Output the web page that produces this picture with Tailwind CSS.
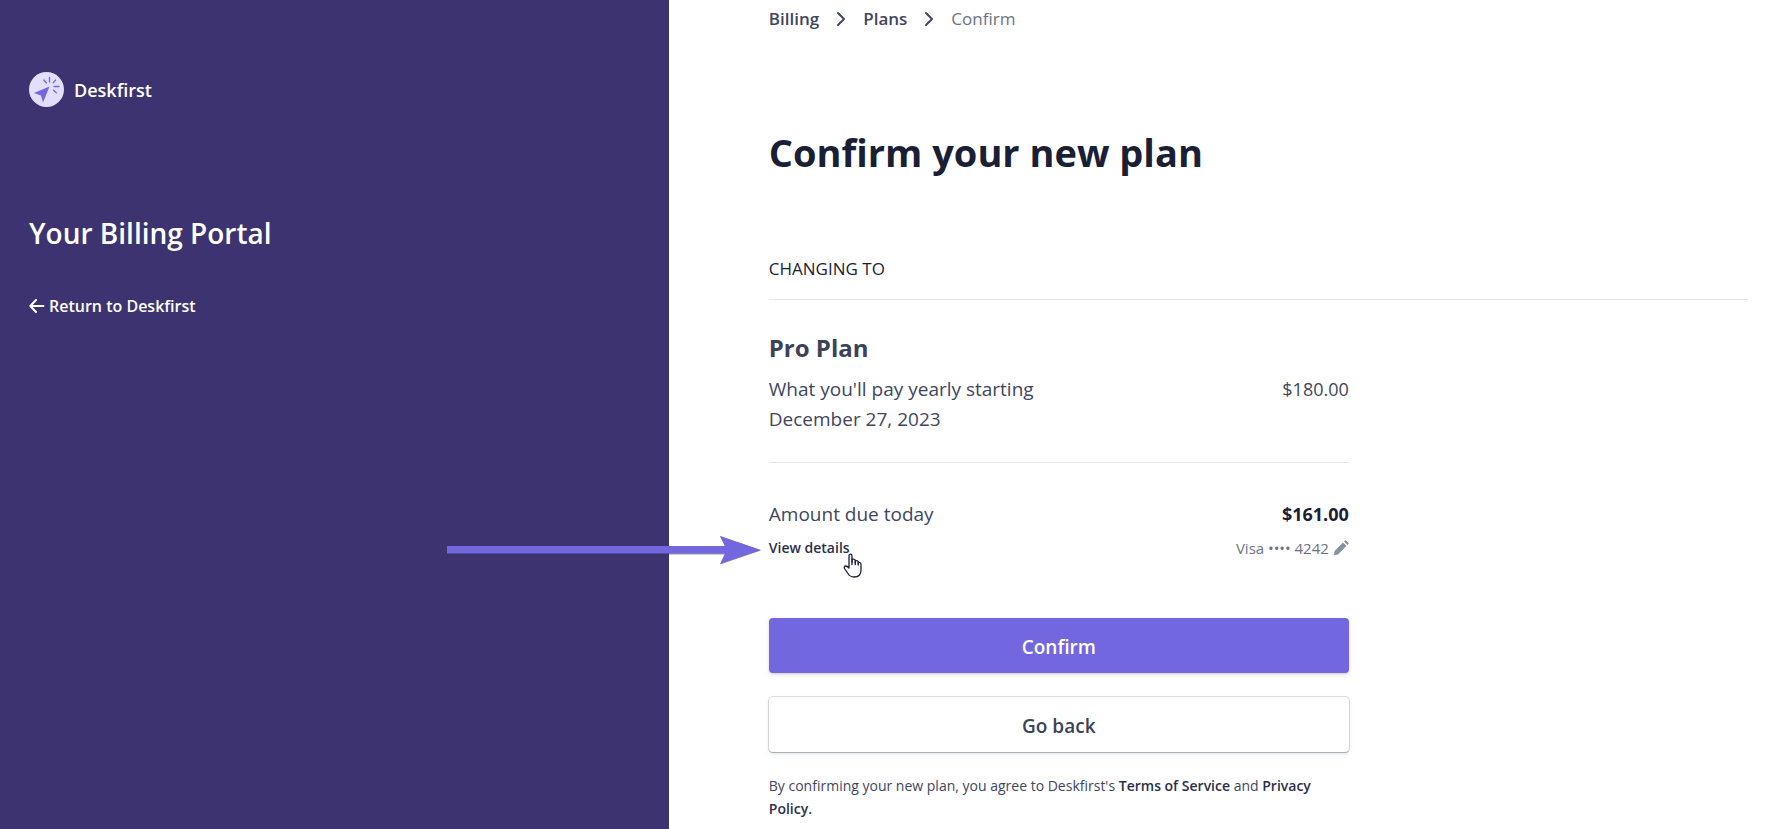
<!DOCTYPE html>
<html lang="en">
<head>
    <meta charset="UTF-8">
    <meta name="viewport" content="width=device-width, initial-scale=1.0">
    <title>Billing Portal</title>
    <script src="https://cdn.jsdelivr.net/npm/@tailwindcss/browser@4"></script>
</head>
<body class="flex min-h-screen bg-white font-['Open_Sans','Noto_Sans',sans-serif] text-[#414660]">
    <!-- Sidebar -->
    <aside class="w-[37.7%] shrink-0 bg-[#3d3370] pl-[29px] pt-[72px] text-white">
        <div class="flex items-center gap-[10px]">
            <svg class="size-[35px]" viewBox="0 0 35 35" fill="none">
                <circle cx="17.5" cy="17.5" r="17.5" fill="#e2defe"/>
                <path d="M20.5 14.5 14 30.5 12 23.5 5 21Z" fill="#7267df"/>
                <path d="M20.5 5.5v4.5M14.8 8l2.6 3M26.6 8l-2.4 2.8M25 14.5h5M24.5 18.2l2.8 2.6" stroke="#7267df" stroke-width="1.3" stroke-linecap="round"/>
            </svg>
            <span class="text-lg leading-7 font-semibold">Deskfirst</span>
        </div>
        <h2 class="mt-[106px] text-[28px] leading-10 font-semibold">Your Billing Portal</h2>
        <a href="#" class="mt-[39px] inline-flex items-center gap-1 text-base leading-7 font-semibold">
            <svg class="size-4" viewBox="0 0 16 16" fill="none" stroke="currentColor" stroke-width="2" stroke-linecap="round" stroke-linejoin="round">
                <path d="M14.5 8H1.5M7 2 1.3 8 7 14"/>
            </svg>
            Return to Deskfirst
        </a>
    </aside>

    <!-- Content -->
    <main class="flex-1 pt-[5px] pr-[26px] pl-[100px]">
        <nav aria-label="Breadcrumb" class="flex items-center gap-[17px] text-[17px] leading-7">
            <a href="#" class="font-semibold">Billing</a>
            <svg class="h-4 w-[10px]" viewBox="0 0 10 16" fill="none" stroke="currentColor" stroke-width="2" stroke-linecap="round" stroke-linejoin="round"><path d="M2 2l6 6-6 6"/></svg>
            <a href="#" class="font-semibold">Plans</a>
            <svg class="h-4 w-[10px]" viewBox="0 0 10 16" fill="none" stroke="currentColor" stroke-width="2" stroke-linecap="round" stroke-linejoin="round"><path d="M2 2l6 6-6 6"/></svg>
            <span class="text-[#6a7383]">Confirm</span>
        </nav>

        <h1 class="mt-[94px] text-[38px] leading-[50px] font-bold text-[#1a1f36]">Confirm your new plan</h1>

        <h2 class="mt-[78px] border-b border-[#e3e8ee] pb-4 text-[17px] leading-7 text-[#1a1f36]">CHANGING TO</h2>

        <div class="max-w-[580px]">
            <h3 class="mt-8 text-[24px] leading-8 font-bold text-[#3c4257]">Pro Plan</h3>
            <div class="mt-[10px] flex items-start justify-between border-b border-[#e3e8ee] pb-7 text-[19px] leading-[30px]">
                <p class="max-w-[290px]">What you'll pay yearly starting December 27, 2023</p>
                <span class="text-lg leading-[30px]">$180.00</span>
            </div>

            <div class="mt-9 flex justify-between text-[19px] leading-[30px]">
                <span>Amount due today</span>
                <span class="text-lg leading-[30px] font-bold text-[#1a1f36]">$161.00</span>
            </div>
            <div class="relative mt-[7px] flex justify-between text-[15px] leading-6">
                <a href="#" class="text-sm leading-6 font-semibold text-[#2b3048]">View details</a>
                <a href="#" class="flex items-center gap-1 font-medium text-[#6a7383]">
                    Visa •••• 4242
                    <svg class="size-4" viewBox="0 0 16 16" fill="#8792a2"><path d="M.8 15.2 1.6 11 10 2.6 13.4 6 5 14.4ZM11 1.6 12.2.4Q12.6 0 13 .4L15.6 3Q16 3.4 15.6 3.8L14.4 5Z"/></svg>
                </a>
                <!-- Pointer arrow and hand cursor -->
                <svg class="absolute top-0 right-full mr-2 h-7 w-[314px]" viewBox="0 0 314 28">
                    <path d="M0 10.5H278L273 0 314 14.5 273 28.5 278 18.500H0Z" fill="#353050" opacity=".5"/>
                    <path d="M0 10H278L273 0 314 14 273 28 278 17.500H0Z" fill="#7267df"/>
                </svg>
                <svg class="absolute top-[17px] left-[74px] h-[25px] w-5" viewBox="0 0 20 25" fill="#fff" stroke="#1a1f36" stroke-width="1.3" stroke-linejoin="round" stroke-linecap="round">
                    <path d="M6 15V3Q6 1.200 7.500 1.200T9 3V9V6.500Q12 5.500 12.300 7.500V10 8Q15 7 15.300 9V11 9.500Q18 9 18 11.500V17Q18 24 11 24 7 24 5 20.500L1.500 15.500Q.6 13.500 2.500 13 4 12.800 6 15Z"/>
                    <path d="M9 6.500V11.500M12.300 7.500V11.500M15.300 9V12"/>
                </svg>
            </div>

            <button type="button" class="mt-[58px] block h-[55px] w-full rounded bg-[#7267df] pt-1 text-[19px] font-semibold text-white shadow-[0_1px_2px_rgba(0,0,0,0.12),0_2px_5px_rgba(60,66,87,0.12)]">Confirm</button>
            <button type="button" class="mt-6 block h-[55px] w-full rounded bg-white pt-1 text-[19px] font-semibold text-[#3c4257] shadow-[0_0_0_1px_rgba(60,66,87,0.16),0_1px_1px_rgba(0,0,0,0.2),0_2px_5px_rgba(60,66,87,0.12)]">Go back</button>

            <p class="mt-[22px] pb-2 text-sm leading-[23px]">By confirming your new plan, you agree to Deskfirst's <a href="#" class="font-semibold text-[#2b3048]">Terms of Service</a> and <a href="#" class="font-semibold text-[#2b3048]">Privacy Policy.</a></p>
        </div>
    </main>
</body>
</html>
